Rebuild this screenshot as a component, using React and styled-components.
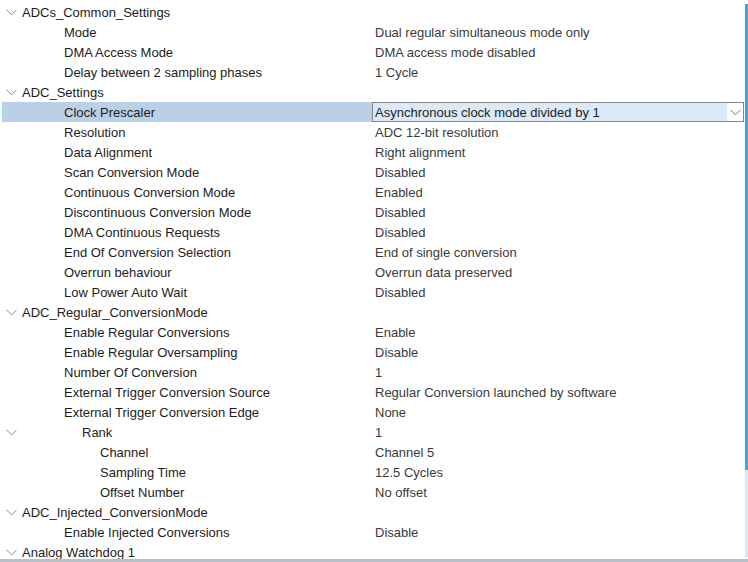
import React from "react";
import styled, { createGlobalStyle } from "styled-components";

const GlobalStyle = createGlobalStyle`
  html, body {
    margin: 0;
    padding: 0;
    background: #ffffff;
  }
  body {
    font-family: "Liberation Sans", Arial, sans-serif;
  }
`;

const Page = styled.div`
  width: 748px;
  height: 562px;
  display: flex;
  flex-direction: column;
  overflow: hidden;
  background: #ffffff;
`;

const Body = styled.div`
  flex: 1;
  display: flex;
  min-height: 0;
`;

const Tree = styled.div`
  flex: 1;
  padding-top: 2px;
  overflow: hidden;
`;

const Row = styled.div`
  display: grid;
  grid-template-columns: 22px 350px 1fr;
  height: 20px;
  align-items: center;
  font-size: 13px;
  padding-right: 1px;
`;

const Toggle = styled.div`
  display: flex;
  align-items: center;
  height: 20px;
  padding-left: 6px;
  box-sizing: border-box;
  background: ${(p) => (p.$selected ? "#bad0e6" : "transparent")};
  margin-left: ${(p) => (p.$selected ? "2px" : "0")};
`;

const Label = styled.div`
  height: 20px;
  line-height: 21px;
  padding-left: ${(p) => p.$indent}px;
  color: #1c1c1c;
  white-space: nowrap;
  overflow: hidden;
  background: ${(p) => (p.$selected ? "#bad0e6" : "transparent")};
`;

const Value = styled.div`
  height: 20px;
  line-height: 21px;
  padding-left: 3px;
  color: #3a3a3a;
  white-space: nowrap;
  overflow: hidden;
`;

const Combo = styled.div`
  height: 20px;
  box-sizing: border-box;
  border: 1px solid #858585;
  display: flex;
  background: #dceaf7;
`;

const ComboText = styled.span`
  flex: 1;
  line-height: 19px;
  padding-left: 2px;
  color: #1c1c1c;
  white-space: nowrap;
`;

const ComboButton = styled.span`
  width: 16px;
  background: #ffffff;
  display: flex;
  align-items: center;
  justify-content: center;
`;

const ScrollBar = styled.div`
  width: 3px;
  padding-top: 4px;
  padding-bottom: 2px;
  display: flex;
  flex-direction: column;
`;

const Thumb = styled.div`
  height: 466px;
  background: #3da8df;
`;

const Track = styled.div`
  flex: 1;
  background: #dde9f4;
`;

const Footer = styled.div`
  height: 3px;
  background: #b7c1c7;
`;

const Chevron = ({ color = "#8a8a8a" }) => (
  <svg width="11" height="7" viewBox="0 0 11 7">
    <path d="M0.5 0.8 L5.5 5.8 L10.5 0.8" fill="none" stroke={color} strokeWidth="1" />
  </svg>
);

const rows = [
  { label: "ADCs_Common_Settings", level: 0, group: true },
  { label: "Mode", level: 1, value: "Dual regular simultaneous mode only" },
  { label: "DMA Access Mode", level: 1, value: "DMA access mode disabled" },
  { label: "Delay between 2 sampling phases", level: 1, value: "1 Cycle" },
  { label: "ADC_Settings", level: 0, group: true },
  { label: "Clock Prescaler", level: 1, value: "Asynchronous clock mode divided by 1", selected: true },
  { label: "Resolution", level: 1, value: "ADC 12-bit resolution" },
  { label: "Data Alignment", level: 1, value: "Right alignment" },
  { label: "Scan Conversion Mode", level: 1, value: "Disabled" },
  { label: "Continuous Conversion Mode", level: 1, value: "Enabled" },
  { label: "Discontinuous Conversion Mode", level: 1, value: "Disabled" },
  { label: "DMA Continuous Requests", level: 1, value: "Disabled" },
  { label: "End Of Conversion Selection", level: 1, value: "End of single conversion" },
  { label: "Overrun behaviour", level: 1, value: "Overrun data preserved" },
  { label: "Low Power Auto Wait", level: 1, value: "Disabled" },
  { label: "ADC_Regular_ConversionMode", level: 0, group: true },
  { label: "Enable Regular Conversions", level: 1, value: "Enable" },
  { label: "Enable Regular Oversampling", level: 1, value: "Disable" },
  { label: "Number Of Conversion", level: 1, value: "1" },
  { label: "External Trigger Conversion Source", level: 1, value: "Regular Conversion launched by software" },
  { label: "External Trigger Conversion Edge", level: 1, value: "None" },
  { label: "Rank", level: 2, value: "1", group: true },
  { label: "Channel", level: 3, value: "Channel 5" },
  { label: "Sampling Time", level: 3, value: "12.5 Cycles" },
  { label: "Offset Number", level: 3, value: "No offset" },
  { label: "ADC_Injected_ConversionMode", level: 0, group: true },
  { label: "Enable Injected Conversions", level: 1, value: "Disable" },
  { label: "Analog Watchdog 1", level: 0, group: true },
];

// text offset inside the label column, per tree depth
const indents = [0, 42, 60, 78];

const TreeRow = ({ row }) => (
  <Row>
    <Toggle $selected={row.selected}>{row.group && <Chevron />}</Toggle>
    <Label $indent={indents[row.level]} $selected={row.selected}>
      {row.label}
    </Label>
    {row.selected ? (
      <Combo>
        <ComboText>{row.value}</ComboText>
        <ComboButton>
          <Chevron color="#6f6f6f" />
        </ComboButton>
      </Combo>
    ) : (
      <Value>{row.value}</Value>
    )}
  </Row>
);

export default function App() {
  return (
    <>
      <GlobalStyle />
      <Page>
        <Body>
          <Tree>
            {rows.map((r, i) => (
              <TreeRow key={i} row={r} />
            ))}
          </Tree>
          <ScrollBar>
            <Thumb />
            <Track />
          </ScrollBar>
        </Body>
        <Footer />
      </Page>
    </>
  );
}
